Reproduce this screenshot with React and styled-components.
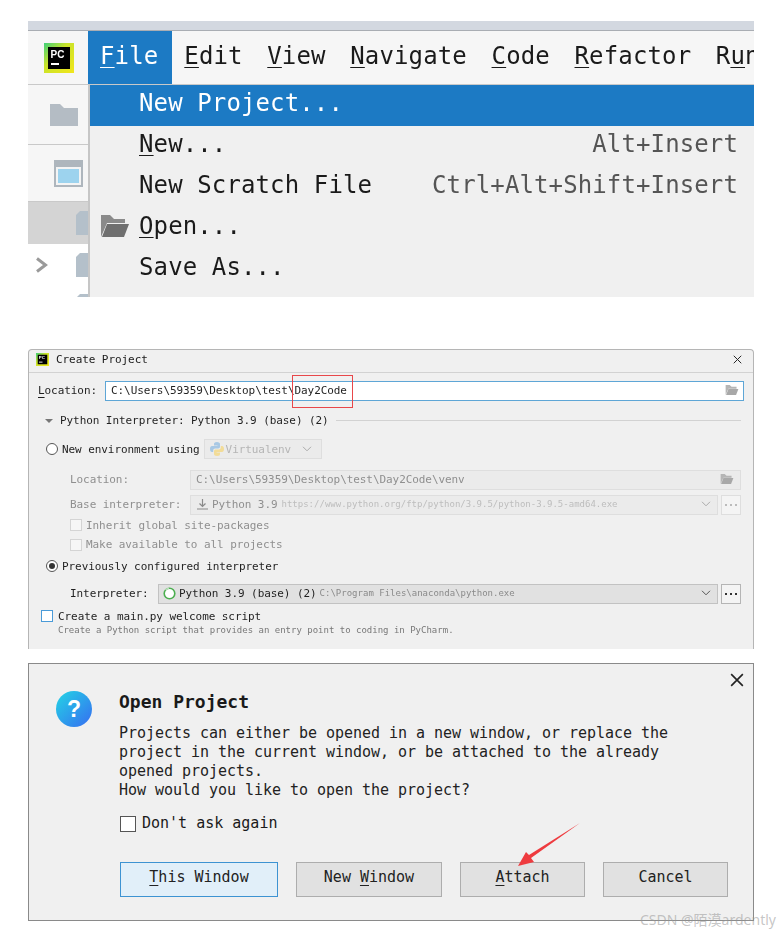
import React from "react";
import styled, { createGlobalStyle } from "styled-components";

const mono = `"DejaVu Sans Mono", "Liberation Mono", monospace`;

const GlobalStyle = createGlobalStyle`
  html, body { margin: 0; padding: 0; background: #fff; }
  body { font-family: ${mono}; color: #1a1a1a; }
  * { box-sizing: border-box; }
`;

const Page = styled.div`
  position: relative;
  width: 782px;
  height: 933px;
  padding: 21px 28px 0;
  overflow: hidden;
  u { text-underline-offset: 3px; text-decoration-thickness: 1px; }
`;

/* ---------- IDE menu crop ---------- */
const Ide = styled.section`
  height: 276px;
  overflow: hidden;
  display: flex;
  flex-direction: column;
  background: #fff;
  filter: blur(0.3px);
`;
const TopStrip = styled.div`
  height: 10px;
  flex: none;
  background: #d3d8e0;
  border-bottom: 1px solid #a9adb3;
`;
const MenuBar = styled.div`
  height: 54px;
  flex: none;
  display: flex;
  background: #f6f6f6;
  font-size: 24px;
  letter-spacing: 0.14px;
  border-bottom: 1px solid #c9c9c9;
  overflow: hidden;
`;
const LogoCell = styled.div`
  width: 60px;
  flex: none;
  display: flex;
  align-items: center;
  padding-left: 16px;
`;
const MenuItem = styled.div`
  flex: none;
  width: ${(p) => (p.$w ? `${p.$w}px` : "auto")};
  display: flex;
  align-items: center;
  padding: 0 ${(p) => p.$pad || 12.3}px 4px;
  background: ${(p) => (p.$active ? "#1c7ac4" : "transparent")};
  color: ${(p) => (p.$active ? "#fff" : "#1a1a1a")};
`;
const IdeBody = styled.div`
  flex: 1;
  display: flex;
  min-height: 0;
`;
const Sidebar = styled.div`
  width: 60px;
  flex: none;
  display: flex;
  flex-direction: column;
  background: #fff;
`;
const SideTool = styled.div`
  height: ${(p) => p.$h}px;
  flex: none;
  display: flex;
  align-items: center;
  justify-content: flex-end;
  padding-right: ${(p) => p.$pr ?? 0}px;
  background: #f6f6f6;
  border-bottom: 1px solid #c9c9c9;
`;
const TreeRow = styled.div`
  height: ${(p) => p.$h}px;
  flex: none;
  display: flex;
  align-items: center;
  justify-content: space-between;
  padding-left: 7px;
  background: ${(p) => p.$bg || "#fff"};
  overflow: hidden;
`;
const Dropdown = styled.div`
  flex: 1;
  background: #f0f0f0;
  border-left: 2px solid #c6c6c6;
  font-size: 24px;
  letter-spacing: 0.12px;
`;
const DropRow = styled.div`
  height: 41px;
  display: flex;
  align-items: center;
  justify-content: space-between;
  padding: 0 16px 5px ${(p) => (p.$icon ? 10 : 49)}px;
  background: ${(p) => (p.$active ? "#1c7ac4" : "transparent")};
  color: ${(p) => (p.$active ? "#fff" : "#1a1a1a")};
`;
const DropLabel = styled.span`
  display: flex;
  align-items: center;
  gap: 9px;
`;
const Shortcut = styled.span`
  color: #555;
`;

/* ---------- Create Project ---------- */
const CreateDialog = styled.section`
  position: relative;
  margin-top: 52px;
  height: 300px;
  background: #f0f0f0;
  border: 1px solid #b5b5b5;
  border-bottom: none;
  border-radius: 4px 4px 0 0;
  font-size: 11px;
  filter: blur(0.35px);
`;
const TitleBar = styled.div`
  height: 23px;
  display: flex;
  align-items: center;
  gap: 7px;
  padding: 0 11px 3px 7px;
  border-bottom: 1px solid #d2d2d2;
  letter-spacing: -0.07px;
`;
const TitleText = styled.span`
  flex: 1;
`;
const Form = styled.div`
  display: flex;
  flex-direction: column;
  padding: 8px 9px 0 9px;
  letter-spacing: -0.07px;
`;
const Row = styled.div`
  height: ${(p) => p.$h}px;
  margin-top: ${(p) => p.$mt || 0}px;
  padding-left: ${(p) => p.$indent || 0}px;
  flex: none;
  display: flex;
  align-items: center;
  color: ${(p) => (p.$muted ? "#8f8f8f" : "#1f1f1f")};
`;
const FieldLabel = styled.span`
  width: ${(p) => p.$w}px;
  flex: none;
  white-space: nowrap;
  margin-bottom: 2px;
`;
const PathInput = styled.div`
  flex: 1;
  height: 100%;
  display: flex;
  align-items: center;
  justify-content: space-between;
  padding: 0 4px 2px 5px;
  background: #fff;
  border: 1px solid #5ea6d6;
`;
const DisabledField = styled.div`
  flex: 1;
  min-width: 0;
  height: 100%;
  display: flex;
  align-items: center;
  justify-content: space-between;
  padding: 0 6px 2px ${(p) => p.$pl ?? 5}px;
  margin-right: ${(p) => p.$mr || 0}px;
  background: ${(p) => (p.$on ? "#e1e1e1" : "#ebebeb")};
  border: 1px solid ${(p) => (p.$on ? "#c2c2c2" : "#dedede")};
  color: ${(p) => (p.$on ? "#1f1f1f" : "#8f8f8f")};
  white-space: nowrap;
  overflow: hidden;
`;
const Inline = styled.span`
  display: flex;
  align-items: center;
  gap: ${(p) => p.$gap || 3}px;
`;
const Hint = styled.span`
  font-size: 9px;
  letter-spacing: 0;
  color: ${(p) => p.$color || "#bdbdbd"};
`;
const DotsButton = styled.div`
  width: 20px;
  height: 100%;
  flex: none;
  margin: 0 3px;
  display: flex;
  align-items: center;
  justify-content: center;
  gap: 3px;
  background: #f4f4f4;
  border: 1px solid ${(p) => (p.$on ? "#b5b5b5" : "#dedede")};
  i {
    width: 2px;
    height: 2px;
    background: ${(p) => (p.$on ? "#333" : "#bbb")};
  }
`;
const Heading = styled.div`
  flex: 1;
  display: flex;
  align-items: center;
  gap: 7px;
  margin-left: 7px;
  &::after {
    content: "";
    flex: 1;
    height: 1px;
    background: #d2d2d2;
    margin-right: 3px;
  }
`;
const Triangle = styled.span`
  width: 0;
  height: 0;
  border-left: 4px solid transparent;
  border-right: 4px solid transparent;
  border-top: 4px solid #777;
  margin-top: 2px;
`;
const Radio = styled.span`
  width: 12px;
  height: 12px;
  flex: none;
  margin: 0 4px 0 8px;
  border-radius: 50%;
  border: 1px solid #555;
  background: #fff;
  display: flex;
  align-items: center;
  justify-content: center;
  &::after {
    content: "";
    width: 6px;
    height: 6px;
    border-radius: 50%;
    background: ${(p) => (p.$checked ? "#333" : "transparent")};
  }
`;
const SelectBox = styled.div`
  width: 118px;
  height: 20px;
  margin-left: 4px;
  display: flex;
  align-items: center;
  justify-content: space-between;
  padding: 0 9px 0 5px;
  background: #ebebeb;
  border: 1px solid #dedede;
  color: #b5b5b5;
`;
const SmallCheck = styled.span`
  width: 12px;
  height: 12px;
  flex: none;
  margin-right: ${(p) => p.$mr}px;
  background: ${(p) => p.$bg || "#f6f6f6"};
  border: 1px solid ${(p) => p.$border || "#d4d4d4"};
`;
const SubText = styled.div`
  font-size: 9px;
  letter-spacing: 0;
  color: #777;
  padding-left: 20px;
`;
const RedBox = styled.div`
  position: absolute;
  left: 263px;
  top: 25px;
  width: 61px;
  height: 33px;
  border: 1px solid #e8474a;
`;

/* ---------- Open Project ---------- */
const OpenDialog = styled.section`
  position: relative;
  margin-top: 14px;
  height: 258px;
  background: #f0f0f0;
  border: 1px solid #8a8a8a;
  display: flex;
  gap: 27px;
  padding: 27px 25px 0 27px;
`;
const CloseMark = styled.div`
  position: absolute;
  top: 9px;
  right: 9px;
  line-height: 0;
`;
const OpenContent = styled.div`
  flex: 1;
  display: flex;
  flex-direction: column;
`;
const OpenTitle = styled.div`
  font-size: 18px;
  font-weight: 700;
  line-height: 22px;
`;
const OpenText = styled.p`
  margin: 11px 0 0;
  font-size: 15px;
  line-height: 19px;
  letter-spacing: -0.03px;
  white-space: pre-line;
  color: #222;
`;
const AskRow = styled.label`
  display: flex;
  align-items: center;
  gap: 6px;
  margin-top: 13px;
  height: 20px;
  font-size: 15px;
`;
const AskBox = styled.span`
  width: 16px;
  height: 16px;
  margin: 2px 0 0 1px;
  background: #fff;
  border: 1px solid #555;
`;
const Buttons = styled.div`
  display: flex;
  margin: 29px 0 0 1px;
`;
const Button = styled.button`
  width: ${(p) => p.$w}px;
  height: 35px;
  flex: none;
  margin-right: ${(p) => p.$mr || 0}px;
  padding: 0 0 5px;
  font-family: ${mono};
  font-size: 15px;
  color: #222;
  background: ${(p) => (p.$primary ? "#e1eff9" : "#e1e1e1")};
  border: 1px solid ${(p) => (p.$primary ? "#3d93d2" : "#adadad")};
`;

const ArrowSvg = styled.svg`
  position: absolute;
  left: 510px;
  top: 815px;
`;
const Watermark = styled.div`
  position: absolute;
  left: 640px;
  top: 911px;
  font-family: "Noto Sans", "Noto Sans CJK SC", sans-serif;
  font-size: 14px;
  line-height: 18px;
  white-space: nowrap;
  color: rgba(150, 150, 150, 0.55);
`;

/* ---------- drawings ---------- */
const PcLogo = ({ size, id }) => (
  <svg width={size} height={size} viewBox="0 0 30 30">
    <defs>
      <linearGradient id={id} x1="0" y1="0" x2="1" y2="1">
        <stop offset="0" stopColor="#3ecf7a" />
        <stop offset="0.4" stopColor="#c9e32a" />
        <stop offset="1" stopColor="#f2e61c" />
      </linearGradient>
    </defs>
    <rect width="30" height="30" fill={`url(#${id})`} />
    <rect x="4" y="4" width="22" height="22" fill="#000" />
    <text x="6.5" y="14.5" fontFamily="Liberation Sans, sans-serif" fontWeight="700" fontSize="10" fill="#fff">
      PC
    </text>
    <rect x="7" y="20" width="8" height="2" fill="#fff" />
  </svg>
);

const Folder = () => (
  <svg width="28" height="22" viewBox="0 0 28 22">
    <path d="M0 0h10l4 4h14v18H0z" fill="#b4bcc4" />
  </svg>
);

const OpenFolder = ({ w, h, back, front }) => (
  <svg width={w} height={h} viewBox="0 0 28 22">
    <path d="M0 22V0h9l4 4h11v4H6z" fill={back} />
    <path d="M6 9h22l-5 13H1z" fill={front} />
  </svg>
);

const WindowIcon = () => (
  <svg width="29" height="27" viewBox="0 0 29 27">
    <rect width="29" height="27" fill="#aeb6bd" />
    <rect x="2" y="7" width="25" height="18" fill="#f4f4f4" />
    <rect x="4" y="9" width="21" height="14" fill="#9dd3ee" />
  </svg>
);

const FileStub = () => (
  <svg width="12" height="24" viewBox="0 0 12 24">
    <path d="M4 0h8v24H0V4z" fill="#b4c0ca" />
  </svg>
);

const Chevron = () => (
  <svg width="14" height="16" viewBox="0 0 14 16">
    <path d="M2 1.5 L10.5 8 L2 14.5" fill="none" stroke="#9a9a9a" strokeWidth="3" />
  </svg>
);

const SmallChevron = ({ c = "#888" }) => (
  <svg width="10" height="6" viewBox="0 0 10 6">
    <path d="M1 .8 L5 4.8 L9 .8" fill="none" stroke={c} strokeWidth="1" />
  </svg>
);

const PythonIcon = () => (
  <svg width="14" height="14" viewBox="0 0 14 14">
    <path d="M7 0C4.5 0 4 1 4 2v1.5h3.5V4H2C.8 4 0 5 0 7s.8 3 2 3h1.2V8.5C3.2 7.3 4 6.5 5.2 6.5h3C9.2 6.5 10 5.8 10 4.8V2C10 1 9 0 7 0z" fill="#a8c8e4" />
    <path d="M10.8 4v1.6c0 1.2-.8 2-2 2h-3c-1 0-1.8.7-1.8 1.7V12c0 1 1 2 3 2 2.5 0 3-1 3-2v-1.5H6.6V10H12c1.2 0 2-1 2-3s-.8-3-2-3z" fill="#f2dc98" />
  </svg>
);

const DownloadIcon = () => (
  <svg width="11" height="11" viewBox="0 0 11 11">
    <path d="M5.5 0v7M2.5 4.5l3 3 3-3M0 10h11" fill="none" stroke="#8a8a8a" strokeWidth="1.2" />
  </svg>
);

const RingIcon = () => (
  <svg width="13" height="13" viewBox="0 0 13 13">
    <circle cx="6.5" cy="6.5" r="5.3" fill="#fff" stroke="#4caf50" strokeWidth="1.6" />
    <path d="M2.5 3 A5.3 5.3 0 0 1 6 1.2" fill="none" stroke="#b9dcb9" strokeWidth="1.6" />
  </svg>
);

const CrossIcon = ({ size, stroke }) => (
  <svg width={size} height={size} viewBox="0 0 12 12">
    <path d="M1 1 L11 11 M11 1 L1 11" stroke="#222" strokeWidth={stroke} fill="none" />
  </svg>
);

const QuestionIcon = () => (
  <svg width="36" height="36" viewBox="0 0 36 36" style={{ flex: "none" }}>
    <defs>
      <linearGradient id="qg" x1="0.1" y1="0.1" x2="0.9" y2="0.9">
        <stop offset="0" stopColor="#25cbe6" />
        <stop offset="1" stopColor="#3477f0" />
      </linearGradient>
    </defs>
    <circle cx="18" cy="18" r="18" fill="url(#qg)" />
    <text x="18" y="26" textAnchor="middle" fontFamily="Liberation Sans, sans-serif" fontWeight="700" fontSize="23" fill="#fff">
      ?
    </text>
  </svg>
);

const menus = [
  { key: "Edit", node: <><u>E</u>dit</> },
  { key: "View", node: <><u>V</u>iew</> },
  { key: "Navigate", node: <><u>N</u>avigate</> },
  { key: "Code", node: <><u>C</u>ode</> },
  { key: "Refactor", node: <><u>R</u>efactor</> },
  { key: "Run", node: <>R<u>u</u>n</> },
];

export default function App() {
  return (
    <Page>
      <GlobalStyle />

      <Ide>
        <TopStrip />
        <MenuBar>
          <LogoCell>
            <PcLogo size={30} id="pc-large" />
          </LogoCell>
          <MenuItem $active $pad={12} $w={84}>
            <span><u>F</u>ile</span>
          </MenuItem>
          {menus.map((m) => (
            <MenuItem key={m.key}>
              <span>{m.node}</span>
            </MenuItem>
          ))}
        </MenuBar>
        <IdeBody>
          <Sidebar>
            <SideTool $h={60} $pr={10}>
              <Folder />
            </SideTool>
            <SideTool $h={57} $pr={5}>
              <WindowIcon />
            </SideTool>
            <TreeRow $h={42} $bg="#d4d4d4">
              <span />
              <FileStub />
            </TreeRow>
            <TreeRow $h={41}>
              <Chevron />
              <FileStub />
            </TreeRow>
            <TreeRow $h={41}>
              <span />
              <FileStub />
            </TreeRow>
          </Sidebar>
          <Dropdown>
            <DropRow $active>New Project...</DropRow>
            <DropRow>
              <span><u>N</u>ew...</span>
              <Shortcut>Alt+Insert</Shortcut>
            </DropRow>
            <DropRow>
              <span>New Scratch File</span>
              <Shortcut>Ctrl+Alt+Shift+Insert</Shortcut>
            </DropRow>
            <DropRow $icon>
              <DropLabel>
                <OpenFolder w={30} h={22} back="#8a8a8a" front="#6f6f6f" />
                <span><u>O</u>pen...</span>
              </DropLabel>
            </DropRow>
            <DropRow>Save As...</DropRow>
          </Dropdown>
        </IdeBody>
      </Ide>

      <CreateDialog>
        <TitleBar>
          <PcLogo size={13} id="pc-small" />
          <TitleText>Create Project</TitleText>
          <CrossIcon size={9} stroke={1.3} />
        </TitleBar>
        <Form>
          <Row $h={20}>
            <FieldLabel $w={67}><u>L</u>ocation:</FieldLabel>
            <PathInput>
              <span>C:\Users\59359\Desktop\test\Day2Code</span>
              <OpenFolder w={14} h={10} back="#b5b5b5" front="#a8a8a8" />
            </PathInput>
          </Row>
          <Row $h={38}>
            <Heading>
              <Triangle />
              <span>Python Interpreter: Python 3.9 (base) (2)</span>
            </Heading>
          </Row>
          <Row $h={20}>
            <Radio />
            <span>New environment using</span>
            <SelectBox>
              <Inline $gap={2}>
                <PythonIcon />
                Virtualenv
              </Inline>
              <SmallChevron c="#aaa" />
            </SelectBox>
          </Row>
          <Row $h={20} $mt={11} $indent={32} $muted>
            <FieldLabel $w={120}>Location:</FieldLabel>
            <DisabledField $mr={3}>
              <span>C:\Users\59359\Desktop\test\Day2Code\venv</span>
              <OpenFolder w={14} h={10} back="#b5b5b5" front="#a8a8a8" />
            </DisabledField>
          </Row>
          <Row $h={20} $mt={5} $indent={32} $muted>
            <FieldLabel $w={120}>Base interpreter:</FieldLabel>
            <DisabledField $pl={6}>
              <Inline $gap={4}>
                <DownloadIcon />
                <span>Python 3.9</span>
                <Hint>https://www.python.org/ftp/python/3.9.5/python-3.9.5-amd64.exe</Hint>
              </Inline>
              <SmallChevron c="#aaa" />
            </DisabledField>
            <DotsButton><i /><i /><i /></DotsButton>
          </Row>
          <Row $h={20} $indent={32} $muted>
            <SmallCheck $mr={4} />
            <span>Inherit global site-packages</span>
          </Row>
          <Row $h={19} $indent={32} $muted>
            <SmallCheck $mr={4} />
            <span>Make available to all projects</span>
          </Row>
          <Row $h={24}>
            <Radio $checked />
            <span>Previously configured interpreter</span>
          </Row>
          <Row $h={20} $mt={6} $indent={32}>
            <FieldLabel $w={88}>Interpreter:</FieldLabel>
            <DisabledField $on $pl={4}>
              <Inline $gap={3}>
                <RingIcon />
                <span>Python 3.9 (base) (2)</span>
                <Hint $color="#8a8a8a">C:\Program Files\anaconda\python.exe</Hint>
              </Inline>
              <SmallChevron c="#555" />
            </DisabledField>
            <DotsButton $on><i /><i /><i /></DotsButton>
          </Row>
          <Row $h={16} $mt={4} $indent={3}>
            <SmallCheck $mr={5} $bg="#fff" $border="#4a9bd8" />
            <span>Create a main.py welcome script</span>
          </Row>
          <Row $h={12}>
            <SubText>Create a Python script that provides an entry point to coding in PyCharm.</SubText>
          </Row>
        </Form>
        <RedBox />
      </CreateDialog>

      <OpenDialog>
        <QuestionIcon />
        <OpenContent>
          <OpenTitle>Open Project</OpenTitle>
          <OpenText>
            {"Projects can either be opened in a new window, or replace the\nproject in the current window, or be attached to the already\nopened projects.\nHow would you like to open the project?"}
          </OpenText>
          <AskRow>
            <AskBox />
            Don't ask again
          </AskRow>
          <Buttons>
            <Button $w={158} $mr={18} $primary><u>T</u>his Window</Button>
            <Button $w={146} $mr={18}>New <u>W</u>indow</Button>
            <Button $w={125} $mr={18}><u>A</u>ttach</Button>
            <Button $w={125}>Cancel</Button>
          </Buttons>
        </OpenContent>
        <CloseMark>
          <CrossIcon size={14} stroke={1.4} />
        </CloseMark>
      </OpenDialog>

      <ArrowSvg width="80" height="60" viewBox="0 0 80 60">
        <path d="M70 8 L21 43 L24 47 L8 51 L16 37 L19 40 Z" fill="#ee3b3f" />
      </ArrowSvg>
      <Watermark>CSDN @陌漠ardently</Watermark>
    </Page>
  );
}
